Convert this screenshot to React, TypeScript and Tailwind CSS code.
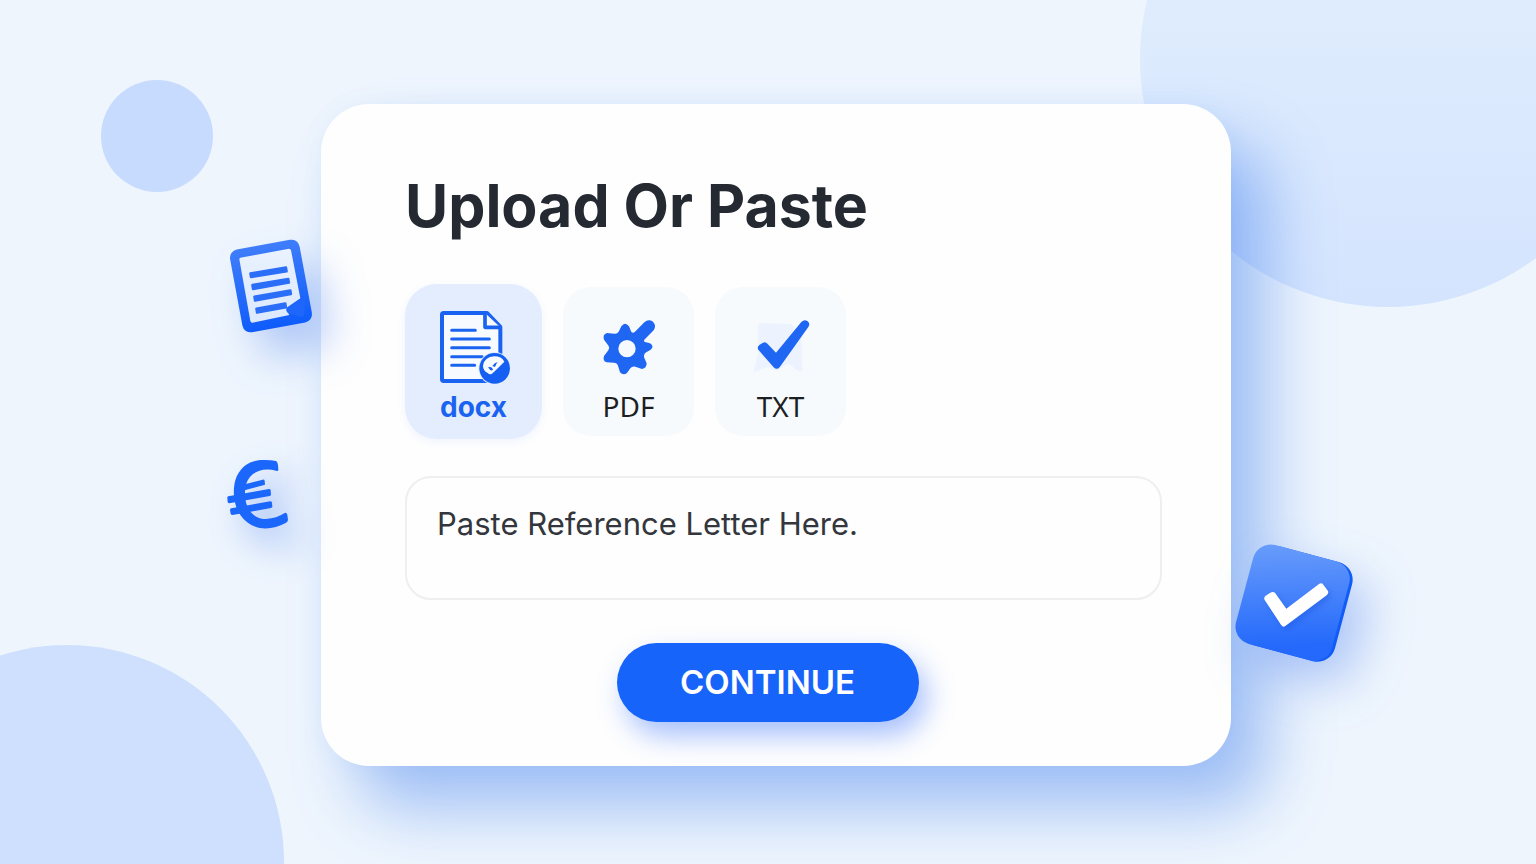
import React, { useState } from "react";

function DocxIcon() {
  return (
    <svg viewBox="120 96 231 240" className="h-20 w-[77px] overflow-visible" aria-hidden="true">
      <path
        d="M146 114H276L316 156V318H146Q141 318 141 313V119Q141 114 146 114Z"
        fill="#f7faff"
        stroke="#1a63f0"
        strokeWidth="12"
        strokeLinejoin="round"
      />
      <path d="M270 114V157H316" fill="#f7faff" stroke="#1a63f0" strokeWidth="11" strokeLinejoin="round" />
      <path
        d="M170 166H241M170 192H283M170 218H283M170 245H262M170 271H239"
        stroke="#1a63f0"
        strokeWidth="9"
        strokeLinecap="round"
      />
      <circle cx="299" cy="280" r="49" fill="#e4edfe" />
      <circle cx="299" cy="280" r="46" fill="#1560f2" />
      <path
        d="M264 272Q268 246 298 244Q320 244 328 260L300 288L290 297Q284 300 278 294Q264 286 264 272Z"
        fill="#f7faff"
      />
      <path d="M279 277Q292 273 294 284Q288 291 279 277Z" fill="#1560f2" />
      <path d="M292 273Q300 261 308 262Q302 268 300 276Z" fill="#1560f2" />
    </svg>
  );
}

function PdfIcon() {
  return (
    <svg viewBox="115 125 180 180" className="size-[60px]" aria-hidden="true">
      <path
        fillRule="evenodd"
        fill="#1f66f3"
        d="M182 153Q193 137 205 153L212 170Q217 175 223 169L251 141Q263 130 277 139Q288 151 279 165L251 193Q248 199 256 201L268 204Q282 213 270 223L257 231Q247 237 251 248L258 264Q258 279 244 281L224 274Q215 271 209 279L199 293Q188 302 178 291L172 271Q169 262 160 262L138 261Q125 257 130 242L143 225Q148 219 144 212L130 193Q125 177 139 173L161 175Q170 176 174 169ZM199 194A26 26 0 1 0 199 246A26 26 0 1 0 199 194Z"
      />
    </svg>
  );
}

function TxtIcon() {
  return (
    <svg viewBox="571 125 180 180" className="size-[60px]" aria-hidden="true">
      <path
        d="M592 150Q592 144 599 144L692 146L722 178L725 284Q720 292 708 284L682 264L648 287L620 276L580 290Q578 284 584 270L594 225Z"
        fill="#ecf3fe"
      />
      <path
        d="M593 223Q588 214 597 208L607 202Q615 198 621 206L646 232L722 140Q731 131 740 137Q750 144 743 155L658 274Q649 286 639 276Z"
        fill="#1f66f3"
      />
    </svg>
  );
}

function FloatingDocument() {
  return (
    <svg
      viewBox="30 30 300 330"
      className="absolute -left-[101px] top-[126px] h-[110px] w-[100px] overflow-visible drop-shadow-[20px_24px_20px_rgba(37,99,235,0.3)]"
      aria-hidden="true"
    >
      <defs>
        <linearGradient id="doc-frame" x1="0" y1="0" x2="0" y2="1">
          <stop offset="0" stopColor="#3f7dfa" />
          <stop offset="1" stopColor="#0f5cfb" />
        </linearGradient>
        <linearGradient id="doc-paper" x1="0" y1="0" x2="0" y2="1">
          <stop offset="0" stopColor="#eaf2fd" />
          <stop offset="1" stopColor="#dbe8fe" />
        </linearGradient>
      </defs>
      <rect x="77" y="72" width="212" height="252" rx="25" fill="url(#doc-frame)" transform="rotate(-10.5 183 198)" />
      <path
        d="M91 113L237 86Q242 86 243 91L271 235L232 262Q226 270 234 278L238 285L127 308Q122 308 121 303L88 118Q88 114 91 113Z"
        fill="url(#doc-paper)"
      />
      <g stroke="#2b6ef8" strokeWidth="7" strokeLinejoin="round" fill="#2b6ef8">
        <path d="M121 160L228 142L230 154L123 171Z" />
        <path d="M127 195L235 177L237 188L129 207Z" />
        <path d="M133 230L241 211L243 222L135 242Z" />
        <path d="M139 266L226 250L228 262L141 278Z" />
      </g>
      <path d="M231 263L285 235L282 286Q276 294 264 287L234 279Q226 271 231 263Z" fill="#1f66fb" />
    </svg>
  );
}

function FloatingEuro() {
  return (
    <svg
      viewBox="30 30 240 270"
      className="absolute -left-[101px] top-[346px] h-[90px] w-20 overflow-visible drop-shadow-[16px_18px_18px_rgba(37,99,235,0.42)]"
      aria-hidden="true"
    >
      <g fill="#1c67fb">
        <path d="M198 63Q205 66 205 90Q204 95 198 92C155 80 111 98 106 145C99 195 125 238 168 237Q200 235 224 219Q230 217 232 224L234 240Q233 246 227 249C193 267 157 272 124 255C82 233 66 181 73 135C81 85 118 57 165 60Q184 60 198 63Z" />
        <path d="M104 133L158 119Q163 118 164 122L165 134L104 151Z" />
        <path d="M52 173Q51 170 55 169L177 147Q181 147 182 151L183 164Q183 167 179 168L58 190Q54 190 53 186Z" />
        <path d="M60 210Q60 206 64 205L181 184Q185 184 186 188L187 199Q187 203 183 204L68 225Q63 225 62 221Z" />
      </g>
    </svg>
  );
}

function FloatingCheck() {
  return (
    <svg
      viewBox="45 45 420 420"
      className="absolute -right-[134px] top-[431px] size-[140px] overflow-visible drop-shadow-[16px_22px_24px_rgba(37,99,235,0.32)]"
      aria-hidden="true"
    >
      <defs>
        <linearGradient id="check-face" x1="0" y1="0" x2="0.3" y2="1">
          <stop offset="0" stopColor="#6b9efb" />
          <stop offset="1" stopColor="#2469fb" />
        </linearGradient>
      </defs>
      <g transform="rotate(15 249 248)">
        <rect x="112" y="95" width="294" height="307" rx="54" fill="#115cf6" />
        <rect x="99" y="95" width="298" height="307" rx="54" fill="url(#check-face)" />
      </g>
      <path
        d="M164 240Q160 233 167 227L181 218Q190 213 196 220L229 266L327 192Q335 187 340 194L354 213Q357 220 350 226L226 318Q219 323 214 316Z"
        fill="#fff"
        className="drop-shadow-[8px_10px_8px_rgba(20,80,220,0.35)]"
      />
    </svg>
  );
}

const formats = [
  { id: "docx", label: "docx", Icon: DocxIcon },
  { id: "pdf", label: "PDF", Icon: PdfIcon },
  { id: "txt", label: "TXT", Icon: TxtIcon },
];

export default function App() {
  const [selected, setSelected] = useState("docx");
  const [letter, setLetter] = useState("");

  return (
    <main className="relative flex min-h-screen items-center justify-center overflow-hidden bg-[#eef5fd] pl-4 pt-1.5 font-['Inter',sans-serif]">
      {/* Background circles */}
      <div className="absolute left-[101px] top-20 size-28 rounded-full bg-[#c7dbfe]" />
      <div className="absolute -right-[100px] -top-[189px] size-[496px] rounded-full bg-linear-to-b from-[#deecfd] from-40% to-[#d4e4fe]" />
      <div className="absolute -bottom-[215px] -left-[150px] size-[434px] rounded-full bg-[#cee0fd]" />

      <div className="relative w-full max-w-[910px]">
        <section className="flex flex-col gap-10 rounded-[48px] bg-[#fefefe] pb-11 pl-[84px] pr-[69px] pt-16 shadow-[36px_42px_64px_rgba(40,110,235,0.4),0_0_24px_rgba(60,130,235,0.06)]">
          <h1 className="text-[59px] font-bold leading-[76px] text-[#252a32]">Upload Or Paste</h1>

          <div className="flex items-center gap-[21px]">
            {formats.map(({ id, label, Icon }) => (
              <button
                key={id}
                type="button"
                aria-pressed={selected === id}
                onClick={() => setSelected(id)}
                className={
                  selected === id
                    ? "flex w-[137px] flex-col items-center gap-1 rounded-[32px] bg-[#e4edfe] pb-4 pt-[23px] text-[28px] font-bold leading-8 text-[#1a63f0] shadow-[0_3px_8px_rgba(37,99,235,0.07)]"
                    : "flex w-[131px] flex-col items-center gap-[3px] rounded-[28px] bg-[#f6fafd] pb-3.5 pt-5 font-['Noto_Sans',sans-serif] text-[28px] leading-8 text-[#1d1f23]"
                }
              >
                <span className="flex h-20 items-center">
                  <Icon />
                </span>
                {label}
              </button>
            ))}
          </div>

          <textarea
            aria-label="Reference letter"
            placeholder="Paste Reference Letter Here."
            value={letter}
            onChange={(e) => setLetter(e.target.value)}
            className="-mt-[3px] h-[124px] resize-none rounded-[26px] border-2 border-[#efeff0] bg-transparent px-[30px] pt-[26px] text-[31px] leading-10 text-[#33363c] outline-none placeholder:text-[#33363c]"
          />

          <div className="flex justify-center pr-8 pt-[3px]">
            <button
              type="button"
              className="h-[79px] w-[302px] rounded-full bg-[#1764fb] text-[33px] font-semibold text-white shadow-[8px_14px_28px_rgba(37,99,250,0.4)]"
            >
              CONTINUE
            </button>
          </div>
        </section>

        <FloatingDocument />
        <FloatingEuro />
        <FloatingCheck />
      </div>
    </main>
  );
}
